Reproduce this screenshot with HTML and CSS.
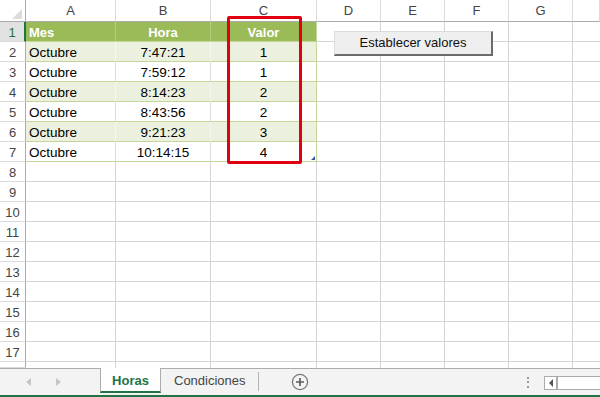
FILE: index.html
```html
<!DOCTYPE html>
<html lang="es">
<head>
<meta charset="utf-8">
<title>Horas</title>
<link rel="stylesheet" href="styles.css">
</head>
<body>
<div class="app">
  <div class="sheet">
    <div class="corner"><svg width="25" height="21" viewBox="0 0 25 21"><polygon points="22,9 22,19 12,19" fill="#dcdcdc"/></svg></div>
    <div class="ch">A</div><div class="ch">B</div><div class="ch">C</div><div class="ch">D</div><div class="ch">E</div><div class="ch">F</div><div class="ch">G</div><div class="ch e"></div>

    <div class="rh act">1</div>
    <div class="th">Mes</div><div class="th ctr">Hora</div><div class="th ctr tr">Valor</div>
    <div></div><div></div><div></div><div></div><div class="e"></div>

    <div class="rh">2</div>
    <div class="td band">Octubre</div><div class="td band ctr">7:47:21</div><div class="td band ctr tr">1</div>
    <div></div><div></div><div></div><div></div><div class="e"></div>

    <div class="rh">3</div>
    <div class="td">Octubre</div><div class="td ctr">7:59:12</div><div class="td ctr tr">1</div>
    <div></div><div></div><div></div><div></div><div class="e"></div>

    <div class="rh">4</div>
    <div class="td band">Octubre</div><div class="td band ctr">8:14:23</div><div class="td band ctr tr">2</div>
    <div></div><div></div><div></div><div></div><div class="e"></div>

    <div class="rh">5</div>
    <div class="td">Octubre</div><div class="td ctr">8:43:56</div><div class="td ctr tr">2</div>
    <div></div><div></div><div></div><div></div><div class="e"></div>

    <div class="rh">6</div>
    <div class="td band">Octubre</div><div class="td band ctr">9:21:23</div><div class="td band ctr tr">3</div>
    <div></div><div></div><div></div><div></div><div class="e"></div>

    <div class="rh">7</div>
    <div class="td">Octubre</div><div class="td ctr">10:14:15</div><div class="td ctr tr handle">4</div>
    <div></div><div></div><div></div><div></div><div class="e"></div>

    <div class="rh">8</div><div></div><div></div><div></div><div></div><div></div><div></div><div></div><div class="e"></div>
    <div class="rh">9</div><div></div><div></div><div></div><div></div><div></div><div></div><div></div><div class="e"></div>
    <div class="rh">10</div><div></div><div></div><div></div><div></div><div></div><div></div><div></div><div class="e"></div>
    <div class="rh">11</div><div></div><div></div><div></div><div></div><div></div><div></div><div></div><div class="e"></div>
    <div class="rh">12</div><div></div><div></div><div></div><div></div><div></div><div></div><div></div><div class="e"></div>
    <div class="rh">13</div><div></div><div></div><div></div><div></div><div></div><div></div><div></div><div class="e"></div>
    <div class="rh">14</div><div></div><div></div><div></div><div></div><div></div><div></div><div></div><div class="e"></div>
    <div class="rh">15</div><div></div><div></div><div></div><div></div><div></div><div></div><div></div><div class="e"></div>
    <div class="rh">16</div><div></div><div></div><div></div><div></div><div></div><div></div><div></div><div class="e"></div>
    <div class="rh">17</div><div></div><div></div><div></div><div></div><div></div><div></div><div></div><div class="e"></div>
    <div class="rh p"></div><div class="p"></div><div class="p"></div><div class="p"></div><div class="p"></div><div class="p"></div><div class="p"></div><div class="p"></div><div class="p e"></div>

    <span class="redbox"></span>
    <button class="btn" type="button">Establecer valores</button>
  </div>

  <div class="tabbar">
    <div class="nav">
      <span class="arrow-l"></span>
      <span class="arrow-r"></span>
    </div>
    <div class="tab active">Horas</div>
    <div class="tab">Condiciones</div>
    <div class="sep"></div>
    <div class="add">
      <svg width="18" height="18" viewBox="0 0 18 18">
        <circle cx="9" cy="9" r="7.6" fill="none" stroke="#7a7a7a" stroke-width="1.3"/>
        <path d="M9 5v8M5 9h8" stroke="#5f5f5f" stroke-width="1.7"/>
      </svg>
    </div>
    <div class="spacer"></div>
    <div class="dots"><i></i><i></i><i></i></div>
    <div class="hscroll">
      <div class="hs-btn"><span class="hs-arrow"></span></div>
      <div class="hs-track"></div>
    </div>
  </div>
</div>
</body>
</html>
```
FILE: styles.css
```css
* { box-sizing: border-box; margin: 0; padding: 0; }
html, body { width: 600px; height: 397px; overflow: hidden; background: #fff; }
body { font-family: "Liberation Sans", Arial, sans-serif; font-size: 13px; color: #000; }

.app { display: flex; flex-direction: column; width: 600px; height: 397px; }

/* ---------- sheet grid ---------- */
.sheet {
  position: relative;
  display: grid;
  grid-template-columns: 26px 90px 95px 106px 64px 64px 64px 64px 27px;
  grid-template-rows: 22px repeat(17, 20px) 6px;
  height: 368px;
  overflow: hidden;
}
.sheet > div {
  border-right: 1px solid #d4d4d4;
  border-bottom: 1px solid #d4d4d4;
  padding: 2px 3px 0;
  line-height: 17px;
  white-space: nowrap;
  overflow: hidden;
}
.sheet > .e { border-right: none; }
.sheet > .p { border-bottom: none; }

.sheet > .corner { padding: 0; border-right: 1px solid #ababab; border-bottom: 1px solid #ababab; }
.corner svg { display: block; }

.sheet > .ch {
  padding: 0;
  line-height: 21px;
  text-align: center;
  color: #444;
  border-right: 1px solid #dadada;
  border-bottom: 1px solid #ababab;
}

.sheet > .rh {
  padding: 2px 0 0;
  text-align: center;
  color: #444;
  border-right: 1px solid #ababab;
  border-bottom: 1px solid #dadada;
}
.sheet > .rh.act {
  background: #e1e1e1;
  color: #217346;
  border-right: 2px solid #217346;
}

/* table */
.sheet > .th {
  background: #9bbb59;
  color: #fff;
  font-weight: bold;
  border-right: 1px solid #b3cb85;
  border-bottom: 1px solid #c4d79b;
}
.sheet > .td {
  font-size: 13.5px;
  border-right: 1px solid #dcdcdc;
  border-bottom: 1px solid #c4d79b;
}
.sheet > .td.band { background: #ebf1de; border-right-color: #f5f8ef; }
.sheet > .tr { border-right-color: #c4d79b; }
.sheet > .td.band.tr { border-right-color: #c4d79b; }
.ctr { text-align: center; }

.sheet > .handle { position: relative; }
.handle::after {
  content: "";
  position: absolute;
  right: 1px;
  bottom: 1px;
  width: 0;
  height: 0;
  border-left: 4px solid transparent;
  border-bottom: 4px solid #3955a3;
}

/* overlays */
.redbox {
  position: absolute;
  left: 227px;
  top: 16px;
  width: 75px;
  height: 148px;
  border: 3px solid #e1000f;
  border-radius: 2px;
  pointer-events: none;
}

.btn {
  position: absolute;
  left: 334px;
  top: 31px;
  width: 159px;
  height: 25px;
  background: #efefef;
  border-top: 1px solid #dcdcdc;
  border-left: 1px solid #dcdcdc;
  border-right: 2px solid #6b6b6b;
  border-bottom: 2px solid #6b6b6b;
  font-family: "Liberation Sans", Arial, sans-serif;
  font-size: 13px;
  color: #111;
  padding: 0;
  line-height: 20px;
}

/* ---------- tab bar ---------- */
.tabbar {
  height: 29px;
  display: flex;
  background: #f3f3f3;
  border-top: 1px solid #ababab;
  border-bottom: 2px solid #217346;
}
.nav {
  width: 100px;
  display: flex;
  align-items: center;
  gap: 25px;
  padding-left: 26px;
}
.arrow-l, .arrow-r {
  width: 0;
  height: 0;
  border-top: 4px solid transparent;
  border-bottom: 4px solid transparent;
}
.arrow-l { border-right: 5px solid #c6c6c6; }
.arrow-r { border-left: 5px solid #c6c6c6; }

.tab {
  display: flex;
  align-items: center;
  color: #444;
  padding: 0 0 3px 13px;
  width: 97px;
}
.tab.active {
  width: 61px;
  margin-top: -1px;
  height: 25px;
  padding: 2px 0 0;
  justify-content: center;
  background: #fff;
  border-left: 1px solid #ababab;
  border-right: 1px solid #ababab;
  border-bottom: 2px solid #217346;
  color: #217346;
  font-weight: bold;
}
.sep {
  width: 1px;
  height: 19px;
  margin-top: 3px;
  background: #b4b4b4;
}
.add {
  margin-left: 32px;
  display: flex;
  align-items: center;
  padding-bottom: 1px;
}
.add svg { display: block; }
.spacer { flex: 1; }
.dots {
  display: flex;
  flex-direction: column;
  justify-content: center;
  gap: 2.5px;
  margin-right: 15px;
}
.dots i { display: block; width: 2px; height: 2px; background: #9a9a9a; }

.hscroll {
  width: 56px;
  height: 14px;
  margin-top: 7px;
  display: flex;
  background: #fff;
  border: 1px solid #ababab;
  border-right: none;
}
.hs-btn {
  width: 13px;
  display: flex;
  align-items: center;
  justify-content: center;
  border-right: 2px solid #ababab;
}
.hs-arrow {
  width: 0;
  height: 0;
  border-top: 4px solid transparent;
  border-bottom: 4px solid transparent;
  border-right: 4px solid #555;
}
.hs-track { flex: 1; }
```
